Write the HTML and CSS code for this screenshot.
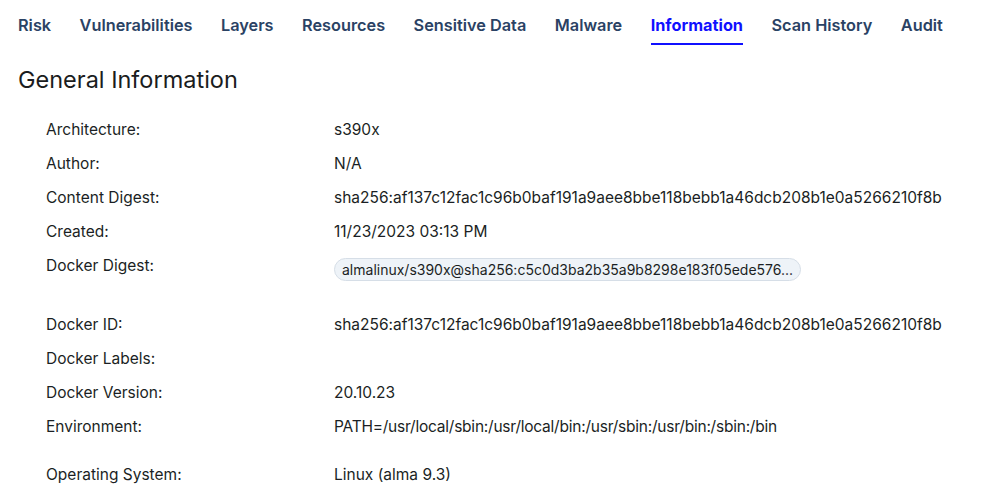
FILE: index.html
```html
<!DOCTYPE html>
<html>
<head>
<meta charset="utf-8">
<link rel="stylesheet" href="styles.css">
</head>
<body>
<nav class="tabs">
  <a class="tab">Risk</a>
  <a class="tab">Vulnerabilities</a>
  <a class="tab">Layers</a>
  <a class="tab">Resources</a>
  <a class="tab">Sensitive Data</a>
  <a class="tab">Malware</a>
  <a class="tab active">Information</a>
  <a class="tab">Scan History</a>
  <a class="tab">Audit</a>
</nav>
<h1 class="title">General Information</h1>
<div class="info">
  <div class="row"><div class="label">Architecture:</div><div class="value">s390x</div></div>
  <div class="row"><div class="label">Author:</div><div class="value">N/A</div></div>
  <div class="row"><div class="label">Content Digest:</div><div class="value">sha256:af137c12fac1c96b0baf191a9aee8bbe118bebb1a46dcb208b1e0a5266210f8b</div></div>
  <div class="row"><div class="label">Created:</div><div class="value">11/23/2023 03:13 PM</div></div>
  <div class="row tall"><div class="label">Docker Digest:</div><div class="value"><span class="chip">almalinux/s390x@sha256:c5c0d3ba2b35a9b8298e183f05ede576...</span></div></div>
  <div class="row"><div class="label">Docker ID:</div><div class="value">sha256:af137c12fac1c96b0baf191a9aee8bbe118bebb1a46dcb208b1e0a5266210f8b</div></div>
  <div class="row"><div class="label">Docker Labels:</div><div class="value"></div></div>
  <div class="row"><div class="label">Docker Version:</div><div class="value">20.10.23</div></div>
  <div class="row env"><div class="label">Environment:</div><div class="value narrow">PATH=/usr/local/sbin:/usr/local/bin:/usr/sbin:/usr/bin:/sbin:/bin</div></div>
  <div class="row"><div class="label">Operating System:</div><div class="value">Linux (alma 9.3)</div></div>
</div>
</body>
</html>
```
FILE: styles.css
```css
* { box-sizing: border-box; }
html, body { margin: 0; padding: 0; background: #fff; }
body {
  font-family: Inter, "Noto Sans", sans-serif;
  color: #1b1f24;
  overflow: hidden;
}
.tabs {
  display: flex;
  gap: 28.5px;
  padding: 0 0 0 18px;
  height: 45px;
}
.tab {
  display: block;
  font-size: 16.3px;
  font-weight: 600;
  color: #2a4264;
  line-height: 22px;
  padding-top: 14px;
  height: 45px;
  border-bottom: 2px solid transparent;
}
.tab.active {
  color: #1010ff;
  font-weight: 700;
  border-bottom-color: #1010ff;
}
.title {
  margin: 20px 0 0 18px;
  font-size: 23.5px;
  font-weight: 400;
  line-height: 30px;
  color: #1a1c20;
}
.info {
  margin: 25px 0 0 46px;
}
.row {
  display: grid;
  grid-template-columns: 288px 1fr;
  height: 34px;
  align-items: start;
  font-size: 15.5px;
  line-height: 20px;
}
.row.tall { height: 59px; }
.row.env { height: 48px; }
.label { color: #1b1f24; }
.value { color: #1b1f24; }
.value.narrow { letter-spacing: -0.23px; }
.chip {
  display: inline-block;
  margin-top: 2px;
  padding: 0 7px;
  height: 23px;
  line-height: 21px;
  font-size: 14px;
  background: #eef3f8;
  border: 1px solid #d6dee7;
  border-radius: 12px;
}
```
